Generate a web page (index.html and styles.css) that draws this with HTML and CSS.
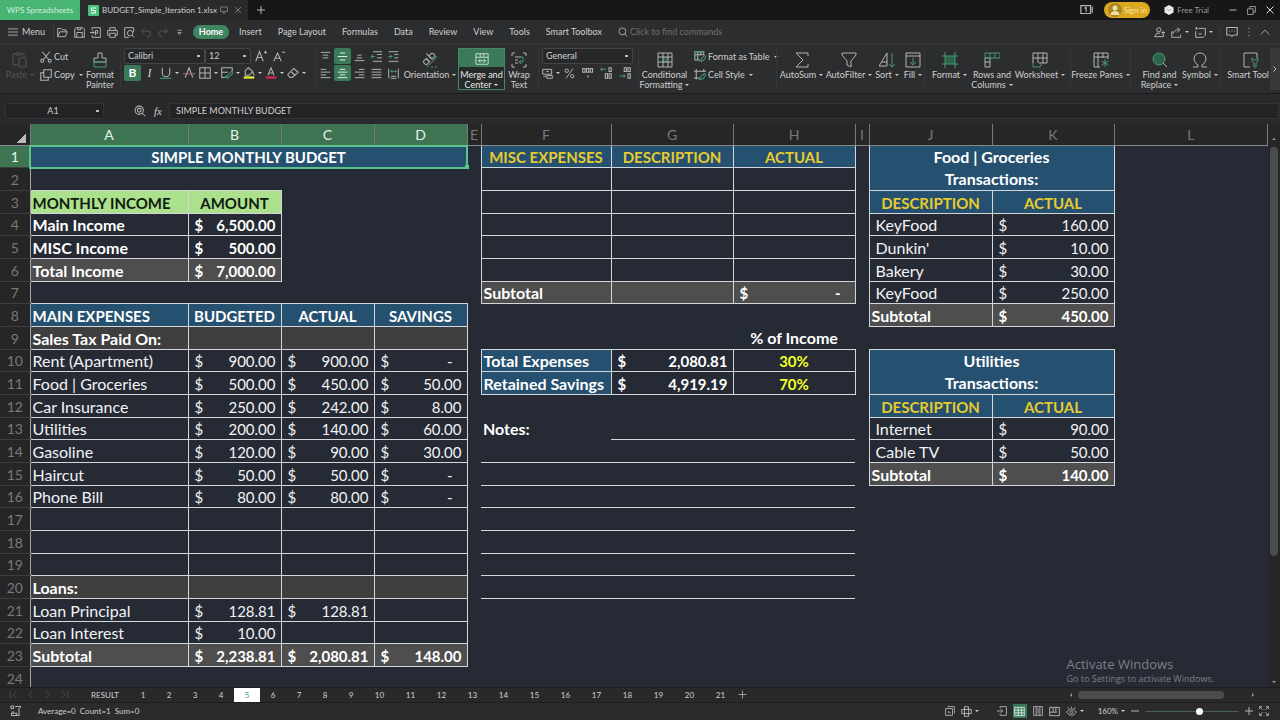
FILE: index.html
```html
<!DOCTYPE html>
<html lang="en">
<head>
<meta charset="utf-8">
<title>BUDGET_Simple_Iteration 1.xlsx - WPS Spreadsheets</title>
<link rel="stylesheet" href="styles.css">
</head>
<body>
<header class="titlebar">
  <button class="home-tab">WPS Spreadsheets</button>
  <div class="file-tab">
    <svg class="logo" viewBox="0 0 11 11"><rect width="11" height="11" rx="1" fill="#45c47c"/><path d="M8 3H3.5v2.500H7.500V8H3" stroke="#fff" fill="none"/></svg>
    <span class="file-name">BUDGET_Simple_Iteration 1.xlsx</span>
    <svg class="ic s8 dim" viewBox="0 0 16 16"><path d="M1 2h14v9H1zM5 14h6M8 11v3"/></svg>
    <button aria-label="Close tab"><svg class="ic s8 dim" viewBox="0 0 16 16"><path d="M2 2l12 12M14 2L2 14"/></svg></button>
  </div>
  <button class="new-tab" aria-label="New tab"><svg class="ic s8" viewBox="0 0 16 16"><path d="M8 0v16M0 8h16"/></svg></button>
  <div class="window-tools">
    <svg class="ic s14" viewBox="0 0 16 16"><path d="M1 3h11v9H1zM14 4v7M5 6l2-1v5"/></svg>
    <button class="sign-in"><svg class="avatar" viewBox="0 0 14 14"><circle cx="7" cy="7" r="7" fill="#a98524"/><circle cx="7" cy="5" r="2.500" fill="#f3dfa4"/><path d="M2.500 12a4.500 4 0 0 1 9 0z" fill="#f3dfa4"/></svg>Sign in</button>
    <button class="trial"><svg class="gem" viewBox="0 0 10 10"><path d="M5 0l4.500 2.500v5L5 10 .5 7.500v-5z" fill="#e9e9ee"/><path d="M3 4l2 2 2-2" stroke="#aaa" fill="none"/></svg>Free Trial</button>
    <button aria-label="Minimize"><svg class="ic s8" viewBox="0 0 16 16"><path d="M1 8h14"/></svg></button>
    <button aria-label="Restore"><svg class="ic s9" viewBox="0 0 16 16"><path d="M1 5h10v10H1zM5 5V1h10v10h-4"/></svg></button>
    <button aria-label="Close"><svg class="ic s8 bright" viewBox="0 0 16 16"><path d="M1 1l14 14M15 1L1 15"/></svg></button>
  </div>
</header>

<nav class="menubar">
  <button class="menu-main"><svg class="ic s10" viewBox="0 0 16 16"><path d="M0 3h16M0 8h16M0 13h16"/></svg>Menu</button>
  <div class="quick">
    <button aria-label="Open"><svg class="ic s11" viewBox="0 0 16 16"><path d="M1 14V2h5l2 2h5v3M1 14h11l3-7H4z"/></svg></button>
    <button aria-label="Save"><svg class="ic s11" viewBox="0 0 16 16"><path d="M1 3l2-2h10l2 2v12H1zM4 15V8h8v7M5 1v3h5V1"/></svg></button>
    <button aria-label="Export to PDF"><svg class="ic s11" viewBox="0 0 16 16"><path d="M3 5V1h12v14H3v-3M0 8h6M4 6l2 2-2 2M8 12V5h3v4H8"/></svg></button>
    <button aria-label="Print"><svg class="ic s11" viewBox="0 0 16 16"><path d="M4 5V1h8v4M4 12H1V5h14v7h-3M4 9h8v6H4z"/></svg></button>
    <button aria-label="Print preview"><svg class="ic s11" viewBox="0 0 16 16"><path d="M7 15H1V1h13v6M12 12l3 3"/><circle cx="9" cy="9" r="4"/></svg></button>
    <button aria-label="Undo"><svg class="ic s11 off" viewBox="0 0 16 16"><path d="M5 2L1 6l4 4M1 6h9a4 4 0 0 1 0 8H8"/></svg></button>
    <button aria-label="Redo"><svg class="ic s11 off" viewBox="0 0 16 16"><path d="M11 2l4 4-4 4M15 6H6a4 4 0 0 0 0 8h2"/></svg></button>
    <button aria-label="Customize"><svg class="ic s9" viewBox="0 0 16 16"><path d="M4 4h8M5 8h6l-3 4z"/></svg></button>
  </div>
  <div class="menu-tabs">
    <button class="active">Home</button><button>Insert</button><button>Page Layout</button><button>Formulas</button><button>Data</button><button>Review</button><button>View</button><button>Tools</button><button>Smart Toolbox</button>
  </div>
  <label class="find"><svg class="ic s10" viewBox="0 0 16 16"><circle cx="7" cy="7" r="5.500"/><path d="M11 11l4 4"/></svg><input type="text" placeholder="Click to find commands" aria-label="Find commands"></label>
  <div class="menu-right">
    <button aria-label="Collaborate"><svg class="ic s11" viewBox="0 0 16 16"><circle cx="7" cy="4" r="3"/><path d="M9 9H4l-3 5h13v-4M11 8h5M13 6v5"/></svg></button>
    <button class="caret" aria-label="Share"><svg class="ic s11" viewBox="0 0 16 16"><path d="M3 7H1v8h13v-4M3 10c1-4 4-6 8-6M9 1l4 3-4 4"/></svg></button>
    <button class="caret last" aria-label="History"><svg class="ic s11" viewBox="0 0 16 16"><path d="M5 2h10v10l-3 3H1V6M0 2h4M2 0v4M5 10h5"/></svg></button>
    <button aria-label="Comments"><svg class="ic s12" viewBox="0 0 16 16"><path d="M1 2h14v10h-5l-2 2-2-2H1zM4 7h1M7.500 7h1M11 7h1"/></svg></button>
    <button aria-label="More"><svg class="ic s10" viewBox="0 0 16 16"><path d="M8 1v2M8 7v2M8 13v2"/></svg></button>
    <button aria-label="Collapse ribbon"><svg class="ic s10" viewBox="0 0 16 16"><path d="M1 12l7-7 7 7"/></svg></button>
  </div>
</nav>

<section class="ribbon" aria-label="Home tools">
  <button class="big off"><svg class="ic s16" viewBox="0 0 16 16"><path d="M6 13H1V2h3M9 2h3v3M4 1h5v2H4zM7 6h7v9H7z"/></svg><span class="caret">Paste</span></button>
  <div class="stack">
    <button><svg class="ic s12" viewBox="0 0 16 16"><path d="M3 1l9 11M13 1L4 12"/><circle cx="3" cy="13" r="2"/><circle cx="13" cy="13" r="2"/></svg>Cut</button>
    <button class="caret"><svg class="ic s12" viewBox="0 0 16 16"><path d="M5 1h10v10H5zM5 5H1v10h10v-4"/></svg>Copy</button>
  </div>
  <button class="big"><svg class="ic s16" viewBox="0 0 16 16"><path d="M6 6V1h4v5h4v4H2V6z"/><path class="gr" d="M2 10h12v5H2z"/></svg><span>Format<br>Painter</span></button>
  <div class="font-group sep">
    <div class="pair">
      <select aria-label="Font" class="font-name"><option>Calibri</option></select><select aria-label="Font size" class="font-size"><option>12</option></select>
      <button aria-label="Increase font size"><svg class="ic s12" viewBox="0 0 16 16"><path d="M1 15L6 2l5 13M3 10h6M12 3h4M14 1v4"/></svg></button>
      <button aria-label="Decrease font size"><svg class="ic s12" viewBox="0 0 16 16"><path d="M1 15L6 4l5 11M3 11h6M12 3h4"/></svg></button>
    </div>
    <div class="icons wide">
      <button class="on bold">B</button>
      <button class="italic">I</button>
      <button class="caret under" aria-label="Underline"><svg class="ic s12" viewBox="0 0 16 16"><path d="M3 1v7a5 5 0 0 0 10 0V1"/><path class="gr" d="M0 15h15"/></svg></button>
      <button aria-label="Strikethrough"><svg class="ic s12" viewBox="0 0 16 16"><path d="M3 14L8 1l5 13"/><path d="M0 9h16" stroke="#b7656f"/></svg></button>
      <button class="caret" aria-label="Borders"><svg class="ic s12" viewBox="0 0 16 16"><path d="M1 1h14v14H1zM8 1v14M1 8h14"/></svg></button>
      <button class="caret" aria-label="Cell styles"><svg class="ic s12" viewBox="0 0 16 16"><path d="M7 14H1V1h14v5M1 7h8"/><path class="gr" d="M9 15l-1-3 6-6 2 2-6 6zM4 14l4-2"/></svg></button>
      <button class="caret" aria-label="Fill color"><svg class="ic s12" viewBox="0 0 16 16"><path d="M7 1l6 5-5 5H3V5zM13 7l2 4"/><path d="M1 14h14" stroke="#eded31" stroke-width="3"/></svg></button>
      <button class="caret" aria-label="Font color"><svg class="ic s12" viewBox="0 0 16 16"><path d="M4 11L8 1l4 10M5 8h6"/><path d="M1 14h14" stroke="#d82850" stroke-width="3"/></svg></button>
      <button class="caret" aria-label="Clear"><svg class="ic s12" viewBox="0 0 16 16"><path d="M1 10l8-8 6 5-8 7H4zM5 6l6 5"/></svg></button>
    </div>
  </div>
  <div class="align-group sep">
    <div class="icons">
      <button aria-label="Top align"><svg class="ic s11" viewBox="0 0 16 16"><path d="M1 2h14M4 6h8M4 10h8"/></svg></button>
      <button class="on" aria-label="Middle align"><svg class="ic s11" viewBox="0 0 16 16"><path d="M4 3h8M1 8h14M4 13h8"/></svg></button>
      <button aria-label="Bottom align"><svg class="ic s11" viewBox="0 0 16 16"><path d="M5 6h6M4 10h8M1 14h14"/></svg></button>
      <button aria-label="Decrease indent"><svg class="ic s11" viewBox="0 0 16 16"><path d="M3 1h13M9 5h7M9 10h7M3 15h13"/><path class="gr" d="M0 8h6M3 5L0 8l3 3"/></svg></button>
      <button aria-label="Increase indent"><svg class="ic s11" viewBox="0 0 16 16"><path d="M1 1h14M9 5h6M9 10h6M1 15h14"/><path class="gr" d="M0 8h6M3 5l3 3-3 3"/></svg></button>
    </div>
    <div class="icons">
      <button aria-label="Align left"><svg class="ic s11" viewBox="0 0 16 16"><path d="M1 2h8M1 6h14M1 10h8M1 14h14"/></svg></button>
      <button class="on" aria-label="Center"><svg class="ic s11" viewBox="0 0 16 16"><path d="M4 2h8M1 6h14M4 10h8M1 14h14"/></svg></button>
      <button aria-label="Align right"><svg class="ic s11" viewBox="0 0 16 16"><path d="M7 2h8M1 6h14M7 10h8M1 14h14"/></svg></button>
      <button aria-label="Justify"><svg class="ic s11" viewBox="0 0 16 16"><path d="M1 2h14M1 6h14M1 10h14M1 14h14"/></svg></button>
      <button aria-label="Distribute"><svg class="ic s11" viewBox="0 0 16 16"><path d="M1 1v14M15 1v14M4 12h8M4 15h8"/><path class="gr" d="M4 5h8M6 3L4 5l2 2M10 3l2 2-2 2"/></svg></button>
    </div>
  </div>
  <button class="big"><svg class="ic s16" viewBox="0 0 16 16"><g transform="rotate(-45 7 7)"><circle cx="3" cy="7" r="2.500"/><path d="M5.500 4v6M9 1v9"/><circle cx="11.500" cy="7" r="2.500"/></g><path class="gr" d="M5 15L14 6M11 5h4M15 15h-2M11 15H9"/></svg><span class="caret">Orientation</span></button>
  <button class="big merge"><svg class="ic s16" viewBox="0 0 16 16"><path d="M1 2h14v12H1zM1 6h14M6 2v4M10 2v4M4 10h8M6 8l-2 2 2 2M10 8l2 2-2 2"/></svg><span class="caret">Merge and<br>Center</span></button>
  <button class="big"><svg class="ic s16" viewBox="0 0 16 16"><path d="M4 1H1v3M12 1h3v3M4 15H1v-3M12 15h3v-3M4 5h6M4 8h3M4 11h3"/><path class="gr" d="M10 5h2v5H8M10 8l-2 2 2 2"/></svg><span>Wrap<br>Text</span></button>
  <div class="number-group">
    <select aria-label="Number format"><option>General</option></select>
    <div class="icons">
      <button class="caret" aria-label="Currency"><svg class="ic s11" viewBox="0 0 16 16"><path d="M1 2h13v7H1zM6 5h4M2 12h4M7 11h8v4H7z"/></svg></button>
      <button aria-label="Percent"><svg class="ic s11" viewBox="0 0 16 16"><circle cx="4" cy="4" r="2.500"/><circle cx="12" cy="12" r="2.500"/><path d="M13 1L3 15"/></svg></button>
      <button aria-label="Comma style"><svg class="ic s12" viewBox="0 0 16 16"><path d="M1 2h3v5H1zM6 2h3v5H6zM11 2h3v5h-3zM8 11v3"/></svg></button>
      <button aria-label="Increase decimal"><svg class="ic s12" viewBox="0 0 16 16"><path d="M12 1h3v5h-3zM7 9h3v6H7zM12 9h3v6h-3z"/><path class="gr" d="M1 3h7M3 1L1 3l2 2"/></svg></button>
      <button aria-label="Decrease decimal"><svg class="ic s12" viewBox="0 0 16 16"><path d="M7 1h3v5H7zM12 1h3v5h-3zM12 9h3v6h-3z"/><path class="gr" d="M1 12h7M6 10l2 2-2 2"/></svg></button>
    </div>
  </div>
  <button class="big sep"><svg class="ic s16" viewBox="0 0 16 16"><path class="grf" d="M5 5h6v6H5z"/><path d="M1 1h14v14H1zM1 5h14M1 10h14M6 1v14M11 1v14"/></svg><span class="caret">Conditional<br>Formatting</span></button>
  <div class="stack">
    <button class="caret"><svg class="ic s12" viewBox="0 0 16 16"><path d="M8 12H1V1h12v4M1 5h12M5 1v11M9 1v5"/><path class="gr" d="M1 1h12M1 1v11M9 14l1-4 4-4 2 2-4 5z"/></svg>Format as Table</button>
    <button class="caret"><svg class="ic s12" viewBox="0 0 16 16"><path d="M3 0v14M13 0v4M0 3h16M0 12h7"/><path class="gr" d="M7 14l2-4 5-4 2 2-4 5z"/></svg>Cell Style</button>
  </div>
  <button class="big sep"><svg class="ic s16" viewBox="0 0 16 16"><path d="M14 4V1H2l7 7-7 7h12v-3"/></svg><span class="caret">AutoSum</span></button>
  <button class="big"><svg class="ic s16" viewBox="0 0 16 16"><path d="M1 1h14v2L10 9v6l-4-2V9L1 3z"/></svg><span class="caret">AutoFilter</span></button>
  <button class="big"><svg class="ic s16" viewBox="0 0 16 16"><path d="M0 14L8 1v13zM3 10h5"/><path class="gr" d="M13 1v14M10 12l3 3 3-3"/></svg><span class="caret">Sort</span></button>
  <button class="big"><svg class="ic s16" viewBox="0 0 16 16"><path d="M1 1h14v14H1zM1 4h14"/><path class="gr" d="M8 6v7M5 10l3 3 3-3"/></svg><span class="caret">Fill</span></button>
  <button class="big sep"><svg class="ic s16" viewBox="0 0 16 16"><path class="grf" d="M3 4h10v8H3z"/><path class="gr" d="M3 0v16M13 0v16M0 4h16M0 12h16"/></svg><span class="caret">Format</span></button>
  <button class="big"><svg class="ic s16" viewBox="0 0 16 16"><path d="M1 6h5v9H1zM1 10h5"/><path class="gr" d="M1 1h15v5H1zM6 1v5M11 1v5"/></svg><span class="caret">Rows and<br>Columns</span></button>
  <button class="big"><svg class="ic s16" viewBox="0 0 16 16"><path d="M1 11V1h14v10H7M1 6h14M6 1v10M11 1v10"/><path class="gr" d="M1 11v4h7l2-4"/></svg><span class="caret">Worksheet</span></button>
  <button class="big sep"><svg class="ic s16" viewBox="0 0 16 16"><path d="M7 15H1V1h14v6M1 5h14M5 1v14M10 1v5"/><path class="gr" d="M12 7v8M8.500 9l7 4M15.500 9l-7 4"/></svg><span class="caret">Freeze Panes</span></button>
  <button class="big sep"><svg class="ic s16" viewBox="0 0 16 16"><circle class="grf" cx="7" cy="7" r="6"/><circle class="gr" cx="7" cy="7" r="6"/><path d="M11 11l4 4"/></svg><span class="caret">Find and<br>Replace</span></button>
  <button class="big"><svg class="ic s16" viewBox="0 0 16 16"><path d="M1 15h5v-2C0 10 1 1 8 1s8 9 2 12v2h5"/></svg><span class="caret">Symbol</span></button>
  <button class="big sep clip"><svg class="ic s16" viewBox="0 0 16 16"><path d="M7 15H1V1h13v5"/><path class="gr" d="M11 15V11L9 9V6l2 2h2l2-2v3l-2 2v4z"/></svg><span>Smart Tool</span></button>
  <button class="scroll-right" aria-label="Scroll ribbon"><svg class="ic s8" viewBox="0 0 16 16"><path d="M5 3l5 5-5 5"/></svg></button>
</section>

<section class="formula">
  <select class="name-box" aria-label="Name box"><option>A1</option></select>
  <button aria-label="Zoom cell"><svg class="ic s12" viewBox="0 0 16 16"><circle cx="7" cy="7" r="5.500"/><circle cx="7" cy="7" r="2.500"/><path d="M11 11l4 4"/></svg></button>
  <button class="fx" aria-label="Insert function">fx</button>
  <input type="text" aria-label="Formula" value="SIMPLE MONTHLY BUDGET">
</section>

<main class="workspace">
<div class="sheet">
<table>
<colgroup><col class="c-num"><col class="c-a"><col class="c-b"><col class="c-b"><col class="c-b"><col class="c-gap"><col class="c-f"><col class="c-g"><col class="c-g"><col class="c-gap"><col class="c-j"><col class="c-g"><col></colgroup>
<thead><tr><th class="corner"></th><th class="sel">A</th><th class="sel">B</th><th class="sel">C</th><th class="sel">D</th><th>E</th><th>F</th><th>G</th><th>H</th><th>I</th><th>J</th><th>K</th><th>L</th></tr></thead>
<tbody>
<tr><th class="sel">1</th><td colspan="4" class="t h cap active-cell">SIMPLE MONTHLY BUDGET</td><td></td><td class="t h y">MISC EXPENSES</td><td class="t h y">DESCRIPTION</td><td class="t h y">ACTUAL</td><td></td><td colspan="2" rowspan="2" class="t h two">Food | Groceries<br>Transactions:</td><td></td></tr>
<tr><th>2</th><td colspan="4"></td><td></td><td class="t"></td><td class="t"></td><td class="t"></td><td></td><td></td></tr>
<tr><th>3</th><td class="t lime left">MONTHLY INCOME</td><td class="t lime">AMOUNT</td><td colspan="3"></td><td class="t"></td><td class="t"></td><td class="t"></td><td></td><td class="t h y">DESCRIPTION</td><td class="t h y">ACTUAL</td><td></td></tr>
<tr><th>4</th><td class="t b">Main Income</td><td class="t b m"><span>$</span>6,500.00</td><td colspan="3"></td><td class="t"></td><td class="t"></td><td class="t"></td><td></td><td class="t in">KeyFood</td><td class="t m"><span>$</span>160.00</td><td></td></tr>
<tr><th>5</th><td class="t b">MISC Income</td><td class="t b m"><span>$</span>500.00</td><td colspan="3"></td><td class="t"></td><td class="t"></td><td class="t"></td><td></td><td class="t in">Dunkin'</td><td class="t m"><span>$</span>10.00</td><td></td></tr>
<tr><th>6</th><td class="t b g">Total Income</td><td class="t b g m"><span>$</span>7,000.00</td><td colspan="3"></td><td class="t"></td><td class="t"></td><td class="t"></td><td></td><td class="t in">Bakery</td><td class="t m"><span>$</span>30.00</td><td></td></tr>
<tr><th>7</th><td colspan="4"></td><td></td><td class="t b g">Subtotal</td><td class="t g"></td><td class="t b g m dash"><span>$</span>-</td><td></td><td class="t in">KeyFood</td><td class="t m"><span>$</span>250.00</td><td></td></tr>
<tr><th>8</th><td class="t h left cap">MAIN EXPENSES</td><td class="t h cap">BUDGETED</td><td class="t h cap">ACTUAL</td><td class="t h cap">SAVINGS</td><td></td><td colspan="3"></td><td></td><td class="t b g">Subtotal</td><td class="t b g m"><span>$</span>450.00</td><td></td></tr>
<tr><th>9</th><td class="t b s">Sales Tax Paid On:</td><td class="t s"></td><td class="t s"></td><td class="t s"></td><td></td><td></td><td></td><td class="b mid">% of Income</td><td></td><td colspan="2"></td><td></td></tr>
<tr><th>10</th><td class="t">Rent (Apartment)</td><td class="t m"><span>$</span>900.00</td><td class="t m"><span>$</span>900.00</td><td class="t m dash"><span>$</span>-</td><td></td><td class="t h left">Total Expenses</td><td class="t b m"><span>$</span>2,080.81</td><td class="t pct">30%</td><td></td><td colspan="2" rowspan="2" class="t h two">Utilities<br>Transactions:</td><td></td></tr>
<tr><th>11</th><td class="t">Food | Groceries</td><td class="t m"><span>$</span>500.00</td><td class="t m"><span>$</span>450.00</td><td class="t m"><span>$</span>50.00</td><td></td><td class="t h left">Retained Savings</td><td class="t b m"><span>$</span>4,919.19</td><td class="t pct">70%</td><td></td><td></td></tr>
<tr><th>12</th><td class="t">Car Insurance</td><td class="t m"><span>$</span>250.00</td><td class="t m"><span>$</span>242.00</td><td class="t m"><span>$</span>8.00</td><td></td><td colspan="3"></td><td></td><td class="t h y">DESCRIPTION</td><td class="t h y">ACTUAL</td><td></td></tr>
<tr><th>13</th><td class="t">Utilities</td><td class="t m"><span>$</span>200.00</td><td class="t m"><span>$</span>140.00</td><td class="t m"><span>$</span>60.00</td><td></td><td class="b">Notes:</td><td colspan="2" class="line"></td><td></td><td class="t in">Internet</td><td class="t m"><span>$</span>90.00</td><td></td></tr>
<tr><th>14</th><td class="t">Gasoline</td><td class="t m"><span>$</span>120.00</td><td class="t m"><span>$</span>90.00</td><td class="t m"><span>$</span>30.00</td><td></td><td colspan="3" class="line"></td><td></td><td class="t in">Cable TV</td><td class="t m"><span>$</span>50.00</td><td></td></tr>
<tr><th>15</th><td class="t">Haircut</td><td class="t m"><span>$</span>50.00</td><td class="t m"><span>$</span>50.00</td><td class="t m dash"><span>$</span>-</td><td></td><td colspan="3" class="line"></td><td></td><td class="t b g">Subtotal</td><td class="t b g m"><span>$</span>140.00</td><td></td></tr>
<tr><th>16</th><td class="t">Phone Bill</td><td class="t m"><span>$</span>80.00</td><td class="t m"><span>$</span>80.00</td><td class="t m dash"><span>$</span>-</td><td></td><td colspan="3" class="line"></td><td colspan="4"></td></tr>
<tr><th>17</th><td class="t"></td><td class="t"></td><td class="t"></td><td class="t"></td><td></td><td colspan="3" class="line"></td><td colspan="4"></td></tr>
<tr><th>18</th><td class="t"></td><td class="t"></td><td class="t"></td><td class="t"></td><td></td><td colspan="3" class="line"></td><td colspan="4"></td></tr>
<tr><th>19</th><td class="t"></td><td class="t"></td><td class="t"></td><td class="t"></td><td></td><td colspan="3" class="line"></td><td colspan="4"></td></tr>
<tr><th>20</th><td class="t b s">Loans:</td><td class="t s"></td><td class="t s"></td><td class="t s"></td><td></td><td colspan="3" class="line"></td><td colspan="4"></td></tr>
<tr><th>21</th><td class="t">Loan Principal</td><td class="t m"><span>$</span>128.81</td><td class="t m"><span>$</span>128.81</td><td class="t"></td><td></td><td colspan="7"></td></tr>
<tr><th>22</th><td class="t">Loan Interest</td><td class="t m"><span>$</span>10.00</td><td class="t"></td><td class="t"></td><td></td><td colspan="7"></td></tr>
<tr><th>23</th><td class="t b g">Subtotal</td><td class="t b g m"><span>$</span>2,238.81</td><td class="t b g m"><span>$</span>2,080.81</td><td class="t b g m"><span>$</span>148.00</td><td></td><td colspan="7"></td></tr>
<tr><th>24</th><td colspan="12"></td></tr>
</tbody>
</table>
</div>
<div class="vscroll"><i class="up"></i><div class="vthumb"></div><i class="down"></i></div>
<aside class="watermark"><p class="wm-title">Activate Windows</p><p>Go to Settings to activate Windows.</p></aside>
</main>

<div class="sheetbar">
  <div class="sheet-nav">
    <button aria-label="First sheet"><svg class="ic s9 off" viewBox="0 0 16 16"><path d="M2 2v12M13 2L7 8l6 6"/></svg></button>
    <button aria-label="Previous sheet"><svg class="ic s9 off" viewBox="0 0 16 16"><path d="M11 2L5 8l6 6"/></svg></button>
    <button aria-label="Next sheet"><svg class="ic s9 off" viewBox="0 0 16 16"><path d="M5 2l6 6-6 6"/></svg></button>
    <button aria-label="Last sheet"><svg class="ic s9 off" viewBox="0 0 16 16"><path d="M3 2l6 6-6 6M14 2v12"/></svg></button>
  </div>
  <div class="sheet-tabs">
    <button class="result">RESULT</button><button>1</button><button>2</button><button>3</button><button>4</button><button class="active">5</button><button>6</button><button>7</button><button>8</button><button>9</button><button class="w">10</button><button class="w">11</button><button class="w">12</button><button class="w">13</button><button class="w">14</button><button class="w">15</button><button class="w">16</button><button class="w">17</button><button class="w">18</button><button class="w">19</button><button class="w">20</button><button class="w">21</button><button class="add" aria-label="Add sheet"><svg class="ic s9" viewBox="0 0 16 16"><path d="M8 1v14M1 8h14"/></svg></button>
  </div>
  <div class="hscroll"><i class="prev"></i><div class="hthumb"></div><i class="next"></i></div>
</div>

<footer class="statusbar">
  <svg class="ic s12" viewBox="0 0 16 16"><circle cx="3" cy="3" r="2"/><path d="M7 2h7v2M12 4v10H2v-3h7v3M4 8v3"/></svg>
  <span class="stats">Average=0&nbsp; Count=1&nbsp; Sum=0</span>
  <div class="status-right">
    <button aria-label="Object"><svg class="ic s10" viewBox="0 0 16 16"><path d="M1 4h11v11H1zM4 1h11v11M6 8v3h3"/></svg></button>
    <button class="caret" aria-label="Cross highlight"><svg class="ic s11" viewBox="0 0 16 16"><path d="M5 1h6v14H5zM1 5h14v6H1z"/></svg></button>
    <button class="gap" aria-label="Reading mode"><svg class="ic s10" viewBox="0 0 16 16"><path d="M5 4V1h10v14H5v-3M0 8h9M6 5l3 3-3 3"/></svg></button>
    <button class="view-on" aria-label="Normal view"><svg class="ic s11" viewBox="0 0 16 16"><path d="M1 2h14v12H1zM1 6h14M1 10h14M6 2v12M11 2v12"/></svg></button>
    <button aria-label="Page layout view"><svg class="ic s10" viewBox="0 0 16 16"><path d="M1 1h14v14H1zM5 1v14M11 1v14M8 3v10"/></svg></button>
    <button aria-label="Page break view"><svg class="ic s11" viewBox="0 0 16 16"><path d="M1 2h14v12H1zM6 2v7M10 2v7M1 9h10"/></svg></button>
    <button class="caret" aria-label="Eye protection"><svg class="ic s11" viewBox="0 0 16 16"><path d="M1 9c4-6 10-6 14 0-4 6-10 6-14 0zM8 1v2M3 2l1 2M13 2l-1 2"/><circle cx="8" cy="9" r="2"/></svg></button>
    <button class="caret zoom">160%</button>
    <button aria-label="Zoom out"><svg class="ic s8" viewBox="0 0 16 16"><path d="M0 8h16"/></svg></button>
    <input type="range" min="0" max="100" value="59" aria-label="Zoom level">
    <button aria-label="Zoom in"><svg class="ic s8" viewBox="0 0 16 16"><path d="M8 0v16M0 8h16"/></svg></button>
    <button aria-label="Full screen"><svg class="ic s10" viewBox="0 0 16 16"><path d="M1 5V1h4M11 1h4v4M15 11v4h-4M5 15H1v-4M1 1l5 5M15 1l-5 5M1 15l5-5M15 15l-5-5"/></svg></button>
  </div>
</footer>
</body>
</html>
```
FILE: styles.css
```css
* { box-sizing: border-box; }
html, body { height: 100%; margin: 0; }
body {
  display: flex;
  flex-direction: column;
  overflow: hidden;
  background: #29292b;
  color: #cfcfcf;
  font: 9px/10px Lato, "Open Sans", sans-serif;
}
button, select, input { font: inherit; color: inherit; background: none; border: 0; padding: 0; margin: 0; }
button { display: flex; align-items: center; justify-content: center; white-space: nowrap; }
select { appearance: none; }
input:focus { outline: none; }

.ic { fill: none; stroke: #b4b4b4; stroke-width: 1.4; flex: none; }
.ic .gr { stroke: #479a72; }
.ic .grf { fill: #2f6348; stroke: none; }
.s8 { width: 8px; height: 8px; stroke-width: 2; }
.s9 { width: 9px; height: 9px; }
.s10 { width: 10px; height: 10px; }
.s11 { width: 11px; height: 11px; }
.s12 { width: 12px; height: 12px; }
.s14 { width: 14px; height: 14px; }
.s16 { width: 16px; height: 16px; stroke-width: 1; }
.dim { stroke: #777; }
.bright { stroke: #ddd; }
.off { color: #555; stroke: #555; }
.off .ic { stroke: #555; }
.caret::after {
  content: "";
  display: inline-block;
  margin-left: 3px;
  vertical-align: 2px;
  border: 2px solid transparent;
  border-top-color: currentColor;
  border-bottom: 0;
}

/* title bar */
.titlebar { display: flex; height: 20px; flex: none; background: #181616; }
.home-tab { width: 80px; background: #48b575; color: #d5f0df; font-size: 8px; }
.file-tab { display: flex; align-items: center; width: 168px; padding: 0 6px 0 8px; background: #2a2a2b; }
.logo { width: 11px; height: 11px; margin-right: 3px; }
.file-name { flex: 1; min-width: 0; font-size: 8px; white-space: nowrap; }
.file-tab button { margin-left: 6px; }
.new-tab { width: 26px; }
.window-tools { display: flex; align-items: center; gap: 10px; margin-left: auto; padding-right: 6px; }
.sign-in { width: 46px; height: 16px; gap: 2px; border-radius: 8px; background: #dba81f; color: #f8e6b0; font-size: 8px; }
.avatar { width: 14px; height: 14px; }
.trial { gap: 3px; margin: 0 10px 0 4px; color: #9c9c9c; font-size: 8px; }
.gem { width: 10px; height: 10px; }

/* menu bar */
.menubar { display: flex; align-items: center; height: 25px; flex: none; background: #2c2d2e; border-bottom: 1px solid #363738; }
.menu-main { width: 54px; height: 16px; gap: 4px; border-right: 1px solid #3b3c3d; }
.quick { display: flex; width: 134px; }
.quick button { width: 17px; }
.menu-tabs { display: flex; align-items: center; gap: 16px; padding-left: 5px; }
.menu-tabs .active { width: 36px; height: 14px; margin-right: -6px; border-radius: 7px; background: #3f8560; color: #fff; font-weight: 700; }
.find { display: flex; align-items: center; gap: 2px; margin-left: 16px; }
.find input { width: 110px; }
.find input::placeholder { color: #707172; opacity: 1; }
.menu-right { display: flex; align-items: center; gap: 6px; margin-left: auto; padding-right: 10px; }
.menu-right .last { padding-right: 6px; border-right: 1px solid #3b3c3d; }

/* ribbon */
.ribbon {
  display: grid;
  grid-template-columns: 32px 44px 40px 196px 88px 52px 50px 26px 106px 52px 86px 50px 46px 30px 22px 50px 36px 60px 60px 58px 24px 1fr 10px;
  height: 49px;
  flex: none;
  padding: 3px 0 3px 4px;
  background: #2c2d2e;
  border-bottom: 1px solid #1c1c1d;
}
.big { flex-direction: column; justify-content: flex-start; gap: 2px; padding-top: 4px; }
.big span { min-height: 20px; }
.sep { border-left: 1px solid #353637; }
.stack { display: flex; flex-direction: column; gap: 4px; padding: 2px 0 0 4px; }
.stack button { height: 14px; gap: 1px; justify-content: flex-start; }
.stack svg { margin-right: 1px; }
.font-group { display: flex; flex-direction: column; gap: 1px; padding-left: 3px; }
.pair { display: flex; height: 16px; }
.font-name { width: 81px; }
.font-size { width: 46px; }
.pair button { width: 17px; margin-left: 1px; }
.font-name, .font-size, .number-group select, .name-box {
  height: 16px;
  padding: 0 3px;
  border: 1px solid #444546;
  border-radius: 2px;
  background: linear-gradient(#bbb, #bbb) no-repeat right 4px center / 3px 2px #262728;
}
.icons { display: flex; height: 16px; }
.icons button { width: 17px; height: 16px; border-radius: 2px; }
.icons.wide .caret { width: 22px; }
.icons .on { background: #3b7a58; }
.icons .on .ic { stroke: #e4efe9; }
.icons .bold { font-size: 12px; font-weight: 700; color: #fff; }
.icons .italic { font: italic 12px/16px "Liberation Serif", serif; }
.align-group { display: flex; flex-direction: column; gap: 1px; }
.merge { gap: 4px; height: 42px; margin: 0 1px 0 2px; padding-top: 3px; border: 1px solid #4a8566; background: linear-gradient(#3b7a58 18px, #262a29 18px); color: #e8e8e8; }
.merge .ic { width: 14px; height: 14px; stroke: #d5e7dc; }
.number-group { display: flex; flex-direction: column; gap: 1px; margin-left: 6px; padding-left: 3px; border-left: 1px solid #353637; }
.number-group select { width: 91px; }
.number-group .icons { justify-content: space-between; width: 91px; }
.clip { align-items: flex-end; overflow: hidden; margin-left: 8px; padding-right: 1px; }
.clip .ic { margin-right: 10px; }
.scroll-right { background: #38393a; }

/* formula bar */
.formula { display: flex; align-items: center; height: 30px; flex: none; padding: 3px 1px 0 5px; background: #29292b; }
.name-box { width: 99px; padding-left: 0; text-align-last: center; border-color: #343436; background-color: #232325; }
.formula button { width: 18px; }
.formula .fx { font: italic 11px/14px "Liberation Serif", serif; margin-right: 2px; }
.formula .name-box + button { margin-left: 27px; }
.formula input { flex: 1; height: 16px; padding: 0 6px; border: 1px solid #343436; background: #232325; }

/* worksheet */
.workspace { position: relative; display: flex; flex: 1; min-height: 0; background: #252a34; }
.sheet { flex: 1; min-width: 0; overflow: hidden; }
table { width: 100%; table-layout: fixed; border-collapse: collapse; font: 16px/20px Lato, "Open Sans", sans-serif; color: #f2f3f4; }
.c-num { width: 30px; }
.c-a { width: 158px; }
.c-b { width: 93px; }
.c-gap { width: 14px; }
.c-f { width: 130px; }
.c-g { width: 122px; }
.c-j { width: 123px; }
tr { height: 23px; }
thead tr { height: 21px; }
tbody tr:nth-child(3n+1) { height: 22px; }
th, td { overflow: hidden; white-space: nowrap; }
th { padding: 1px 0 0; font-weight: 400; font-size: 14px; color: #77797a; background: #262627; text-align: center; }
thead th { border-bottom: 1px solid #85888b; border-right: 1px solid #77797a; }
tbody th { border-right: 1px solid #a4a6a8; border-bottom: 1px solid #3d3e3f; }
th.sel { background: #3e7452; color: #e6f3eb; }
.corner { background: linear-gradient(135deg, transparent 50%, #bbb 50%) no-repeat 16px 9px / 10px 10px #262627; }
td { padding: 1px 2px 0; }
.t { border: 1px solid #d4d7da; }
.h { background: #26506f; font-weight: 700; text-align: center; color: #fff; }
.y { color: #e6cb30; }
.b { font-weight: 700; color: #fff; }
.g { background: #4f4e4e; }
.s { background: #3f3f3f; }
.in { padding-left: 6px; }
.lime { background: #abe08d; color: #101a10; font-weight: 700; text-align: center; }
.cap, .y, .lime, .m { font-size: 15px; }
.left { text-align: left; }
.mid, .pct { text-align: center; }
.pct { color: #f4ff28; font-weight: 700; font-size: 15px; }
.m { padding: 1px 5px 0 6px; text-align: right; }
.m span { float: left; }
.dash { padding-right: 14px; }
.two { padding-top: 0; line-height: 22px; }
.line { border-bottom: 1px solid #d4d7da; }
.active-cell { position: relative; overflow: visible; outline: 2px solid #5ac48b; outline-offset: -1px; }
.active-cell::after { content: ""; position: absolute; right: -2px; bottom: -2px; width: 4px; height: 4px; background: #5ac48b; }

.vscroll { display: flex; flex-direction: column; align-items: center; width: 12px; padding: 14px 0 4px; background: #262627; gap: 7px; }
.vthumb { width: 8px; height: 75%; border-radius: 4px; background: #4b4c4e; }
.up, .down { border: 2px solid transparent; }
.up { border-bottom-color: #999; border-top: 0; }
.down { border-top-color: #999; border-bottom: 0; margin-top: auto; }
.watermark { position: absolute; right: 66px; bottom: 2px; color: #7d8088; font: 9px/12px "Open Sans", sans-serif; }
.watermark p { margin: 0; }
.watermark .wm-title { font-size: 13px; line-height: 17px; }

/* sheet tabs */
.sheetbar { display: flex; align-items: center; height: 15px; flex: none; padding-bottom: 1px; background: #29292a; border-top: 1px solid #1e1e20; }
.sheet-nav { display: flex; width: 80px; padding-left: 5px; }
.sheet-nav button { width: 17px; }
.sheet-tabs { display: flex; height: 14px; }
.sheet-tabs button { width: 26px; font-size: 8px; }
.sheet-tabs .result { width: 50px; }
.sheet-tabs .w { width: 31px; }
.sheet-tabs .add { width: 13px; }
.sheet-tabs .active { background: #fff; color: #3fa873; }
.hscroll { display: flex; align-items: center; gap: 6px; width: 184px; margin: 0 26px 0 auto; }
.hthumb { width: 146px; height: 8px; border-radius: 4px; background: #4b4c4e; }
.prev, .next { border: 2px solid transparent; }
.prev { border-right-color: #999; border-left: 0; }
.next { border-left-color: #999; border-right: 0; margin-left: auto; }

/* status bar */
.statusbar { display: flex; align-items: center; height: 18px; flex: none; padding: 0 0 1px 10px; background: #2b2b2c; border-top: 1px solid #1e1e20; }
.stats { margin-left: 16px; font-size: 8px; }
.status-right { display: flex; align-items: center; gap: 6px; margin-left: auto; padding-right: 11px; }
.status-right .gap { margin-left: 12px; }
.view-on { width: 14px; height: 14px; background: #3b7a58; }
.view-on .ic { stroke: #cfe3d7; }
.zoom { margin-left: 8px; font-size: 8px; }
input[type="range"] { appearance: none; width: 94px; height: 10px; background: linear-gradient(#4b6357, #4b6357) no-repeat center / 100% 1px; }
input[type="range"]::-webkit-slider-thumb { appearance: none; width: 7px; height: 7px; border-radius: 50%; background: #fff; }
```
